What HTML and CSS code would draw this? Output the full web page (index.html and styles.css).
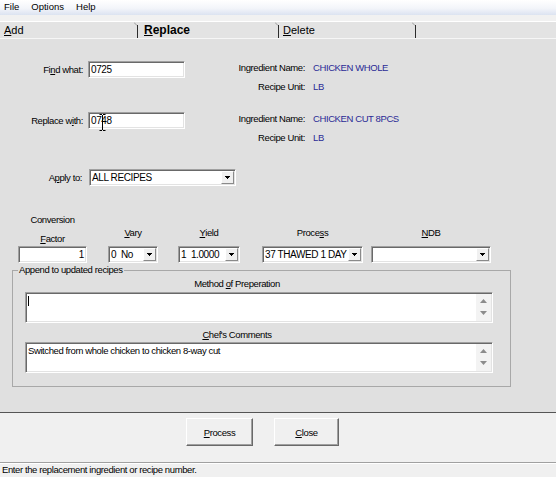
FILE: index.html
```html
<!DOCTYPE html>
<html lang="en">
<head>
    <meta charset="UTF-8">
    <title>Replace Ingredient</title>
    <link rel="stylesheet" href="styles.css">
</head>
<body>
    <div class="window">
        <div class="menubar">
            <span class="menu-item">File</span>
            <span class="menu-item">Options</span>
            <span class="menu-item">Help</span>
        </div>

        <div class="tabstrip">
            <div class="tabs">
                <div class="tab tab-add"><u>A</u>dd</div>
                <svg class="tab-sep" viewBox="0 0 4 16"><path d="M0 0.5L3 3.5" stroke="#9a9a9a"/><path d="M3.5 3V16" stroke="#2b2b2b"/></svg>
                <div class="tab tab-replace"><u>R</u>eplace</div>
                <svg class="tab-sep" viewBox="0 0 4 16"><path d="M0 0.5L3 3.5" stroke="#9a9a9a"/><path d="M3.5 3V16" stroke="#2b2b2b"/></svg>
                <div class="tab tab-delete"><u>D</u>elete</div>
                <svg class="tab-sep" viewBox="0 0 4 16"><path d="M0 0.5L3 3.5" stroke="#9a9a9a"/><path d="M3.5 3V16" stroke="#2b2b2b"/></svg>
            </div>
        </div>

        <div class="panel">
            <div class="pair">
                <div class="field">
                    <span class="field-label">Fi<u>n</u>d what:</span>
                    <div class="textbox">0725</div>
                </div>
                <div class="info">
                    <span class="info-label">Ingredient Name:</span><span class="info-value">CHICKEN WHOLE</span>
                    <span class="info-label">Recipe Unit:</span><span class="info-value">LB</span>
                </div>
            </div>

            <div class="pair">
                <div class="field">
                    <span class="field-label">Replace w<u>i</u>th:</span>
                    <div class="textbox">0748
                        <!-- mouse pointer sitting over the box -->
                        <svg class="ibeam" viewBox="0 0 7 17"><path d="M0.5 0.5h2.5M4 0.5h2.5M3.5 1v15M0.5 16.5h2.5M4 16.5h2.5" stroke="#000"/></svg>
                    </div>
                </div>
                <div class="info">
                    <span class="info-label">Ingredient Name:</span><span class="info-value">CHICKEN CUT 8PCS</span>
                    <span class="info-label">Recipe Unit:</span><span class="info-value">LB</span>
                </div>
            </div>

            <div class="apply-row">
                <span class="apply-label">A<u>p</u>ply to:</span>
                <div class="combo combo-apply">
                    <span class="combo-text">ALL RECIPES</span>
                    <span class="combo-btn"><svg viewBox="0 0 5 3"><path d="M0 0h5v1H0zM1 1h3v1H1zM2 2h1v1H2z"/></svg></span>
                </div>
            </div>

            <div class="conversion">
                <div class="conv-col col-factor">
                    <span class="conv-title">Conversion</span>
                    <span class="conv-label"><u>F</u>actor</span>
                    <div class="textbox textbox-num">1</div>
                </div>
                <div class="conv-col col-vary">
                    <span class="conv-label"><u>V</u>ary</span>
                    <div class="combo">
                        <span class="combo-text">0&nbsp; No</span>
                        <span class="combo-btn"><svg viewBox="0 0 5 3"><path d="M0 0h5v1H0zM1 1h3v1H1zM2 2h1v1H2z"/></svg></span>
                    </div>
                </div>
                <div class="conv-col col-yield">
                    <span class="conv-label"><u>Y</u>ield</span>
                    <div class="combo">
                        <span class="combo-text">1&nbsp; 1.0000</span>
                        <span class="combo-btn"><svg viewBox="0 0 5 3"><path d="M0 0h5v1H0zM1 1h3v1H1zM2 2h1v1H2z"/></svg></span>
                    </div>
                </div>
                <div class="conv-col col-process">
                    <span class="conv-label">Proce<u>s</u>s</span>
                    <div class="combo">
                        <span class="combo-text">37 THAWED 1 DAY</span>
                        <span class="combo-btn"><svg viewBox="0 0 5 3"><path d="M0 0h5v1H0zM1 1h3v1H1zM2 2h1v1H2z"/></svg></span>
                    </div>
                </div>
                <div class="conv-col col-ndb">
                    <span class="conv-label"><u>N</u>DB</span>
                    <div class="combo">
                        <span class="combo-text"></span>
                        <span class="combo-btn"><svg viewBox="0 0 5 3"><path d="M0 0h5v1H0zM1 1h3v1H1zM2 2h1v1H2z"/></svg></span>
                    </div>
                </div>
            </div>

            <fieldset class="group">
                <legend>Append to updated recipes</legend>
                <div class="group-body">
                    <div class="memo-label">Method <u>o</u>f Preperation</div>
                    <div class="memo">
                        <div class="memo-text"><span class="caret"></span></div>
                        <div class="memo-scroll">
                            <svg viewBox="0 0 7 4"><path d="M3.5 0L7 4H0z" fill="#8c8c8c"/></svg>
                            <svg viewBox="0 0 7 4"><path d="M0 0h7L3.5 4z" fill="#8c8c8c"/></svg>
                        </div>
                    </div>
                    <div class="memo-label memo-label-2"><u>C</u>hef's Comments</div>
                    <div class="memo memo-2">
                        <div class="memo-text">Switched from whole chicken to chicken 8-way cut</div>
                        <div class="memo-scroll">
                            <svg viewBox="0 0 7 4"><path d="M3.5 0L7 4H0z" fill="#8c8c8c"/></svg>
                            <svg viewBox="0 0 7 4"><path d="M0 0h7L3.5 4z" fill="#8c8c8c"/></svg>
                        </div>
                    </div>
                </div>
            </fieldset>
        </div>

        <div class="actions">
            <div class="button button-process"><u>P</u>rocess</div>
            <div class="button button-close"><u>C</u>lose</div>
        </div>

        <div class="status">Enter the replacement ingredient or recipe number.</div>
    </div>
</body>
</html>
```

FILE: styles.css
```css
* {
    box-sizing: border-box;
}

body {
    margin: 0;
    font-family: "Liberation Sans", Arial, sans-serif;
    font-size: 9.5px;
    letter-spacing: -0.4px;
    color: #000;
    background: #e0e0e0;
}

.window {
    display: flex;
    flex-direction: column;
    height: 100vh;
}

/* Menu bar */
.menubar {
    display: flex;
    gap: 12px;
    height: 15px;
    padding-left: 4px;
    font-size: 9.5px;
    letter-spacing: 0;
    line-height: 14px;
    background: linear-gradient(to bottom, #ffffff, #f3f5fa 55%, #dce3f1);
}

/* Tabs */
.tabstrip {
    padding-top: 6px;
    background: #f1f1f1;
}

.tabs {
    display: flex;
    height: 18px;
    border-top: 1px solid #fff;
    border-bottom: 1px solid #f6f6f6;
    background: #e3e3e3;
}

.tab {
    font-size: 11px;
    letter-spacing: 0;
    line-height: 16px;
}

.tab-add {
    width: 134px;
    padding-left: 4px;
}

.tab-replace {
    width: 137px;
    padding-left: 6px;
    font-size: 12px;
    font-weight: bold;
}

.tab-delete {
    width: 133px;
    padding-left: 4px;
}

.tab-sep {
    width: 4px;
    height: 16px;
    flex-shrink: 0;
}

/* Main panel */
.panel {
    flex: 1;
    padding-top: 19px;
    background: #e0e0e0;
}

.pair {
    display: flex;
    align-items: flex-start;
}

.pair + .pair {
    margin-top: 13px;
}

.field {
    display: flex;
    align-items: center;
    margin-top: 3px;
}

.field-label {
    width: 88px;
    padding-right: 5px;
    text-align: right;
}

.textbox,
.combo,
.memo {
    border: 1px solid;
    border-color: #a0a0a0 #fff #fff #a0a0a0;
    box-shadow: inset 1px 1px 0 #696969, inset -1px -1px 0 #e3e3e3;
    background: #fff;
}

.textbox {
    position: relative;
    width: 97px;
    height: 17px;
    padding: 0 2px;
    font-size: 10px;
    line-height: 15px;
}

.textbox-num {
    width: 100%;
    text-align: right;
}

.ibeam {
    position: absolute;
    left: 10px;
    top: 1px;
    width: 7px;
    height: 17px;
}

.info {
    display: grid;
    grid-template-columns: 117px auto;
    column-gap: 8px;
    margin-left: 3px;
    line-height: 19px;
}

.info-label {
    text-align: right;
}

.info-value {
    color: #2a2a96;
}

/* Combo boxes */
.apply-row {
    display: flex;
    align-items: center;
    margin-top: 22px;
}

.apply-label {
    width: 89px;
    padding-right: 7px;
    text-align: right;
}

.combo {
    display: flex;
    height: 17px;
    width: 100%;
    font-size: 10px;
}

.combo-apply {
    width: 147px;
}

.combo-text {
    flex: 1;
    padding-left: 2px;
    line-height: 15px;
    white-space: nowrap;
    overflow: hidden;
    text-align: left;
}

.combo-btn {
    display: flex;
    align-items: center;
    justify-content: center;
    width: 13px;
    margin: 1px 1px 1px 0;
    border: 1px solid;
    border-color: #fff #8a8a8a #8a8a8a #fff;
    background: #f0f0f0;
}

.combo-btn svg {
    width: 5px;
    height: 3px;
}

/* Conversion row */
.conversion {
    display: flex;
    align-items: flex-end;
    margin-top: 28px;
    padding-left: 18px;
}

.conv-col {
    display: flex;
    flex-direction: column;
    text-align: center;
    line-height: 12px;
}

.conv-title {
    margin-bottom: 7px;
}

.conv-label {
    margin-bottom: 7px;
}

.col-factor {
    width: 69px;
}

.col-factor .conv-label {
    margin-bottom: 1px;
}

.col-vary {
    width: 50px;
    margin-left: 21px;
}

.col-yield {
    width: 62px;
    margin-left: 20px;
}

.col-process {
    width: 101px;
    margin-left: 22px;
}

.col-ndb {
    width: 120px;
    margin-left: 8px;
}

/* Append group */
.group {
    width: 499px;
    min-width: 0;
    margin: 1px 0 0 12px;
    padding: 0;
    border: 1px solid #a8a8a8;
}

.group legend {
    margin-left: 5px;
    padding: 0 1px;
    line-height: 12px;
}

.group-body {
    padding: 0 17px 13px 12px;
}

.memo-label {
    margin-top: 2px;
    padding-right: 44px;
    text-align: center;
    line-height: 12px;
}

.memo-label-2 {
    margin-top: 6px;
}

.memo {
    display: flex;
    height: 31px;
    margin-top: 2px;
}

.memo-2 {
    margin-top: 1px;
}

.memo-text {
    flex: 1;
    padding: 2px 2px 0;
    line-height: 12px;
}

.caret {
    display: inline-block;
    width: 1px;
    height: 10px;
    margin-top: 1px;
    vertical-align: top;
    background: #000;
}

.memo-scroll {
    display: flex;
    flex-direction: column;
    justify-content: space-between;
    align-items: center;
    width: 15px;
    margin: 1px 1px 1px 0;
    padding: 5px 0 6px;
    background: #f3f3f3;
}

.memo-scroll svg {
    width: 7px;
    height: 4px;
}

/* Bottom buttons */
.actions {
    display: flex;
    justify-content: center;
    gap: 21px;
    height: 50px;
    padding: 5px 31px 0 0;
    border-top: 1px solid #555;
    background: #f0f0f0;
}

.button {
    display: flex;
    align-items: center;
    justify-content: center;
    height: 28px;
    border: 1px solid;
    border-color: #fff #696969 #696969 #fff;
    box-shadow: inset -1px -1px 0 #a0a0a0;
    background: #f0f0f0;
}

.button-process {
    width: 67px;
}

.button-close {
    width: 65px;
}

/* Status bar */
.status {
    height: 15px;
    padding-left: 2px;
    border-top: 1px solid #a0a0a0;
    box-shadow: inset 0 1px 0 #fff;
    line-height: 14px;
    background: #f0f0f0;
}
```
